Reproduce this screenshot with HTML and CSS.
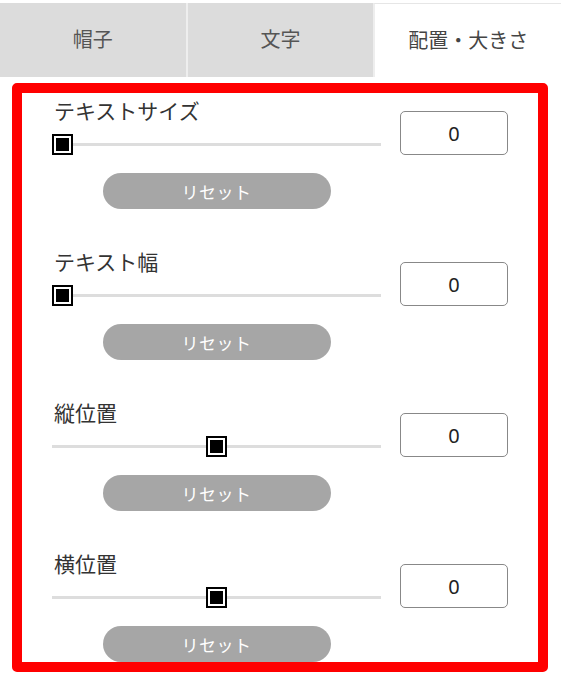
FILE: index.html
```html
<!DOCTYPE html>
<html lang="ja">
<head>
<meta charset="utf-8">
<link rel="stylesheet" href="styles.css">
</head>
<body>
<nav class="tabs">
  <div class="tab">帽子</div>
  <div class="tab">文字</div>
  <div class="tab tab-active">配置・大きさ</div>
</nav>
<main class="panel">
  <section class="row">
    <div class="controls">
      <div class="label">テキストサイズ</div>
      <input class="slider" type="range" min="0" max="100" value="0">
      <button class="reset">リセット</button>
    </div>
    <input class="num" type="text" value="0">
  </section>
  <section class="row">
    <div class="controls">
      <div class="label">テキスト幅</div>
      <input class="slider" type="range" min="0" max="100" value="0">
      <button class="reset">リセット</button>
    </div>
    <input class="num" type="text" value="0">
  </section>
  <section class="row">
    <div class="controls">
      <div class="label">縦位置</div>
      <input class="slider" type="range" min="-100" max="100" value="0">
      <button class="reset">リセット</button>
    </div>
    <input class="num" type="text" value="0">
  </section>
  <section class="row">
    <div class="controls">
      <div class="label">横位置</div>
      <input class="slider" type="range" min="-100" max="100" value="0">
      <button class="reset">リセット</button>
    </div>
    <input class="num" type="text" value="0">
  </section>
</main>
</body>
</html>
```
FILE: styles.css
```css
* { box-sizing: border-box; }
html, body {
  margin: 0;
  padding: 0;
  background: #fff;
  font-family: "Noto Sans CJK JP", "Noto Sans", sans-serif;
}
.tabs {
  display: flex;
  padding-top: 3px;
  height: 77px;
}
.tab {
  flex: 1;
  display: flex;
  align-items: center;
  justify-content: center;
  background: #dcdcdc;
  color: #555;
  font-size: 20px;
  padding-bottom: 3px;
}
.tab + .tab { border-left: 2px solid #eeeeee; }
.tab-active {
  background: #fff;
  color: #444;
  border-top: 1px solid #e6e6e6;
}
.panel {
  margin: 6px 13px 0 12px;
  height: 589px;
  border: 10px solid #ff0000;
  border-radius: 5px;
  padding: 2px 30px 0 30px;
  overflow: hidden;
  background: #fff;
}
.row {
  display: flex;
  align-items: flex-start;
  gap: 19px;
  margin-bottom: 37px;
}
.controls {
  width: 329px;
  display: flex;
  flex-direction: column;
}
.label {
  font-size: 21px;
  line-height: 30px;
  color: #333;
  padding-left: 2px;
  white-space: nowrap;
}
.slider {
  -webkit-appearance: none;
  appearance: none;
  width: 329px;
  height: 21px;
  margin: 9px 0 0 0;
  padding: 0;
  background: transparent;
}
.slider::-webkit-slider-runnable-track {
  height: 3px;
  background: #dddddd;
  border: none;
}
.slider::-webkit-slider-thumb {
  -webkit-appearance: none;
  appearance: none;
  width: 21px;
  height: 21px;
  margin-top: -9px;
  box-sizing: border-box;
  background: #000;
  border: 2px solid #000;
  box-shadow: inset 0 0 0 2px #fff;
  border-radius: 0;
}
.reset {
  align-self: center;
  width: 228px;
  height: 36px;
  margin-top: 18px;
  border: none;
  border-radius: 18px;
  background: #a6a6a6;
  color: #fff;
  font-family: "Noto Sans CJK JP", "Noto Sans", sans-serif;
  font-size: 17px;
  letter-spacing: 0.5px;
  padding: 0;
}
.num {
  width: 108px;
  height: 44px;
  margin-top: 16px;
  border: 1px solid #888;
  border-radius: 5px;
  text-align: center;
  font-family: "Noto Sans", sans-serif;
  font-size: 20px;
  color: #222;
  background: #fff;
  padding: 0;
}
```
